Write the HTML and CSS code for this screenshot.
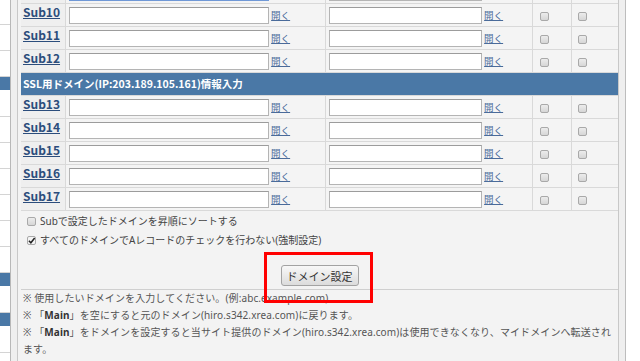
FILE: index.html
```html
<!DOCTYPE html>
<html lang="ja">
<head>
    <meta charset="UTF-8">
    <meta name="viewport" content="width=device-width, initial-scale=1.0">
    <title>ドメイン設定</title>
    <link rel="stylesheet" href="styles.css">
</head>
<body>
<div class="page">
    <aside class="side">
        <div class="side-item first"></div>
        <div class="side-item"></div>
        <div class="side-item"></div>
        <div class="side-item on"></div>
        <div class="side-item"></div>
        <div class="side-item"></div>
        <div class="side-item"></div>
        <div class="side-item"></div>
        <div class="side-item"></div>
        <div class="side-item"></div>
        <div class="side-item"></div>
        <div class="side-item on"></div>
        <div class="side-item"></div>
        <div class="side-item on"></div>
        <div class="side-item"></div>
    </aside>
    <div class="gutter-l"></div>

    <main class="panel">
        <table class="domains">
            <colgroup>
                <col class="c-label"><col class="c-in1"><col class="c-in2"><col class="c-cb1"><col class="c-cb2">
            </colgroup>
            <!-- row scrolled mostly out of view -->
            <tr>
                <td class="label"></td>
                <td><input type="text" class="in1 focus"></td>
                <td><input type="text" class="in2"></td>
                <td class="cb"></td>
                <td class="cb"></td>
            </tr>
            <tr>
                <td class="label"><a href="#">Sub10</a></td>
                <td><input type="text" class="in1"> <a class="open" href="#">開く</a></td>
                <td><input type="text" class="in2"> <a class="open" href="#">開く</a></td>
                <td class="cb"><input type="checkbox" class="box"></td>
                <td class="cb"><input type="checkbox" class="box"></td>
            </tr>
            <tr>
                <td class="label"><a href="#">Sub11</a></td>
                <td><input type="text" class="in1"> <a class="open" href="#">開く</a></td>
                <td><input type="text" class="in2"> <a class="open" href="#">開く</a></td>
                <td class="cb"><input type="checkbox" class="box"></td>
                <td class="cb"><input type="checkbox" class="box"></td>
            </tr>
            <tr>
                <td class="label"><a href="#">Sub12</a></td>
                <td><input type="text" class="in1"> <a class="open" href="#">開く</a></td>
                <td><input type="text" class="in2"> <a class="open" href="#">開く</a></td>
                <td class="cb"><input type="checkbox" class="box"></td>
                <td class="cb"><input type="checkbox" class="box"></td>
            </tr>
            <tr>
                <td class="head" colspan="5">SSL用ドメイン(IP:203.189.105.161)情報入力</td>
            </tr>
            <tr>
                <td class="label"><a href="#">Sub13</a></td>
                <td><input type="text" class="in1"> <a class="open" href="#">開く</a></td>
                <td><input type="text" class="in2"> <a class="open" href="#">開く</a></td>
                <td class="cb"><input type="checkbox" class="box"></td>
                <td class="cb"><input type="checkbox" class="box"></td>
            </tr>
            <tr>
                <td class="label"><a href="#">Sub14</a></td>
                <td><input type="text" class="in1"> <a class="open" href="#">開く</a></td>
                <td><input type="text" class="in2"> <a class="open" href="#">開く</a></td>
                <td class="cb"><input type="checkbox" class="box"></td>
                <td class="cb"><input type="checkbox" class="box"></td>
            </tr>
            <tr>
                <td class="label"><a href="#">Sub15</a></td>
                <td><input type="text" class="in1"> <a class="open" href="#">開く</a></td>
                <td><input type="text" class="in2"> <a class="open" href="#">開く</a></td>
                <td class="cb"><input type="checkbox" class="box"></td>
                <td class="cb"><input type="checkbox" class="box"></td>
            </tr>
            <tr>
                <td class="label"><a href="#">Sub16</a></td>
                <td><input type="text" class="in1"> <a class="open" href="#">開く</a></td>
                <td><input type="text" class="in2"> <a class="open" href="#">開く</a></td>
                <td class="cb"><input type="checkbox" class="box"></td>
                <td class="cb"><input type="checkbox" class="box"></td>
            </tr>
            <tr>
                <td class="label"><a href="#">Sub17</a></td>
                <td><input type="text" class="in1"> <a class="open" href="#">開く</a></td>
                <td><input type="text" class="in2"> <a class="open" href="#">開く</a></td>
                <td class="cb"><input type="checkbox" class="box"></td>
                <td class="cb"><input type="checkbox" class="box"></td>
            </tr>
        </table>

        <div class="opts">
            <label><input type="checkbox" class="box">Subで設定したドメインを昇順にソートする</label>
            <label><input type="checkbox" class="box" checked>すべてのドメインでAレコードのチェックを行わない(強制設定)</label>
        </div>

        <div class="submit">
            <button type="button" class="btn">ドメイン設定</button>
            <span class="mark"></span>
        </div>

        <div class="notes">
            <p>※ 使用したいドメインを入力してください。(例:abc.example.com)</p>
            <p>※ 「<b>Main</b>」を空にすると元のドメイン(hiro.s342.xrea.com)に戻ります。</p>
            <p>※ 「<b>Main</b>」をドメインを設定すると当サイト提供のドメイン(hiro.s342.xrea.com)は使用できなくなり、マイドメインへ転送されます。</p>
        </div>
    </main>
    <div class="gutter-r"></div>
</div>
</body>
</html>
```

FILE: styles.css
```css
body {
    margin: 0;
    background-color: #fff;
    color: #444;
    font-family: "Noto Sans", "Noto Sans CJK JP", sans-serif;
    font-size: 10px;
    overflow: hidden;
}

.page {
    display: flex;
    height: 361px;
}

/* left menu strip */
.side {
    flex: none;
    width: 10px;
    border-right: 1px solid #b8b8b8;
}

.side-item {
    height: 25px;
    border-bottom: 1px solid #d4d4d4;
}

.side-item.first {
    height: 24px;
}

.side-item.on {
    height: 13px;
    background-color: #4a78a6;
    border-bottom-color: #fff;
}

.gutter-l {
    flex: none;
    width: 6px;
    background-color: #efefef;
    border-right: 1px solid #c8c8c8;
}

.gutter-r {
    flex: none;
    width: 6px;
    background-color: #efefef;
    border-right: 1px solid #bdbdbd;
}

/* main panel */
.panel {
    flex: none;
    width: 597px;
    margin-top: -19px;
    padding-left: 3px;
    background-color: #f3f3f3;
    border-right: 1px solid #c8c8c8;
}

.domains {
    width: 597px;
    border-collapse: collapse;
    table-layout: fixed;
}

.c-label { width: 44px; }
.c-in1 { width: 260px; }
.c-in2 { width: 207px; }
.c-cb1 { width: 39px; }
.c-cb2 { width: 47px; }

.domains td {
    height: 22px;
    padding: 0 0 0 3px;
    line-height: 16px;
    border-bottom: 1px solid #d9d9d9;
    border-right: 1px solid #d9d9d9;
    background-color: #f4f4f4;
    white-space: nowrap;
    vertical-align: middle;
}

.domains td:last-child {
    border-right: none;
}

.domains td.label {
    padding: 0 0 0 2px;
    background-color: #efefef;
    vertical-align: top;
}

.label a {
    color: #2c4d7c;
    font-family: "Noto Sans CJK JP", sans-serif;
    font-size: 12px;
    font-weight: bold;
}

.domains td.head {
    padding-left: 2px;
    background-color: #4a78a6;
    color: #fff;
    font-family: "Noto Sans CJK JP", sans-serif;
    font-size: 10.5px;
    font-weight: bold;
}

input[type="text"] {
    box-sizing: border-box;
    height: 17px;
    margin: 0;
    padding: 0 2px;
    border: 1px solid #b4b4b4;
    border-top-color: #9c9c9c;
    background-color: #fff;
    vertical-align: middle;
}

.in1 {
    width: 200px;
}

.in2 {
    width: 153px;
}

input.focus {
    border-color: #6f98d6;
}

.open {
    color: #4a6b9a;
    font-family: "Noto Sans CJK JP", sans-serif;
    font-size: 9.5px;
    vertical-align: middle;
}

.domains td.cb {
    padding-left: 7px;
}

.domains td.cb:last-child {
    padding-left: 6px;
}

.box {
    appearance: none;
    -webkit-appearance: none;
    box-sizing: border-box;
    width: 9px;
    height: 9px;
    margin: 0;
    border: 1px solid #a9a9a9;
    border-radius: 2px;
    background: linear-gradient(#ececec, #d6d6d6);
    vertical-align: middle;
}

.box:checked {
    background: #f4f4f4 url("data:image/svg+xml,%3Csvg xmlns='http://www.w3.org/2000/svg' viewBox='0 0 9 9'%3E%3Cpath d='M1.5 4.5 L3.6 6.7 L7.6 1.6' fill='none' stroke='%23222' stroke-width='1.6'/%3E%3C/svg%3E") no-repeat center / 8px 8px;
}

/* options */
.opts {
    padding: 1px 0 0 6px;
}

.opts label {
    display: block;
    line-height: 19px;
    color: #444;
}

.opts .box {
    margin: -2px 4px 0 0;
}

/* submit */
.submit {
    position: relative;
    padding: 15px 0 3px;
    line-height: 21px;
    text-align: center;
    border-bottom: 1px solid #cfcfcf;
}

.btn {
    height: 21px;
    padding: 0 5px;
    font-family: "Noto Sans CJK JP", sans-serif;
    font-size: 11px;
    color: #333;
    border: 1px solid #a3a3a3;
    border-radius: 3px;
    background: linear-gradient(#f8f8f8, #dcdcdc);
    vertical-align: top;
}

/* red annotation frame */
.mark {
    position: absolute;
    left: 243px;
    top: 2px;
    width: 109px;
    height: 51px;
    box-sizing: border-box;
    border: 3px solid #f00;
    z-index: 2;
}

/* notes */
.notes {
    padding: 0 4px 0 2px;
    color: #555;
    letter-spacing: 0.1px;
}

.notes p {
    margin: 0;
    line-height: 17px;
}

.notes b {
    color: #333;
}
```
